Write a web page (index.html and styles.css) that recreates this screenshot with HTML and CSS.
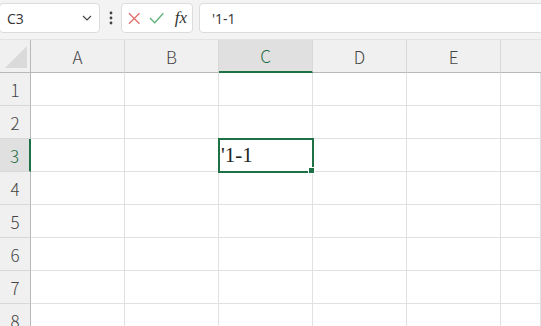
FILE: index.html
```html
<!DOCTYPE html>
<html lang="ja">
<head>
    <meta charset="UTF-8">
    <title>Sheet</title>
    <link rel="stylesheet" href="styles.css">
</head>
<body>
    <!-- Barra de fórmulas -->
    <div class="formula-bar">
        <div class="name-box">
            <span>C3</span>
            <svg class="chevron" width="10" height="6" viewBox="0 0 10 6"><path d="M1 1 L5 5 L9 1" fill="none" stroke="#444" stroke-width="1.2"/></svg>
        </div>
        <div class="dots">
            <svg width="4" height="14" viewBox="0 0 4 14"><circle cx="2" cy="2" r="1.4" fill="#444"/><circle cx="2" cy="7" r="1.4" fill="#444"/><circle cx="2" cy="12" r="1.4" fill="#444"/></svg>
        </div>
        <div class="fx-box">
            <svg width="13" height="13" viewBox="0 0 13 13"><path d="M1 1 L12 12 M12 1 L1 12" stroke="#e06b6b" stroke-width="1.3" fill="none"/></svg>
            <svg width="16" height="12" viewBox="0 0 16 12"><path d="M1 6 L6 11 L15 1" stroke="#5cb176" stroke-width="1.3" fill="none"/></svg>
            <span class="fx">fx</span>
        </div>
        <div class="formula-input">'1-1</div>
    </div>

    <!-- Hoja -->
    <div class="sheet">
        <div class="corner"><div class="triangle"></div></div>
        <div class="col-head">A</div>
        <div class="col-head">B</div>
        <div class="col-head active">C</div>
        <div class="col-head">D</div>
        <div class="col-head">E</div>
        <div class="col-head last"></div>

        <div class="row-head">1</div><div class="cell"></div><div class="cell"></div><div class="cell"></div><div class="cell"></div><div class="cell"></div><div class="cell"></div>
        <div class="row-head">2</div><div class="cell"></div><div class="cell"></div><div class="cell"></div><div class="cell"></div><div class="cell"></div><div class="cell"></div>
        <div class="row-head active">3</div><div class="cell"></div><div class="cell"></div><div class="cell selected">'1-1</div><div class="cell"></div><div class="cell"></div><div class="cell"></div>
        <div class="row-head">4</div><div class="cell"></div><div class="cell"></div><div class="cell"></div><div class="cell"></div><div class="cell"></div><div class="cell"></div>
        <div class="row-head">5</div><div class="cell"></div><div class="cell"></div><div class="cell"></div><div class="cell"></div><div class="cell"></div><div class="cell"></div>
        <div class="row-head">6</div><div class="cell"></div><div class="cell"></div><div class="cell"></div><div class="cell"></div><div class="cell"></div><div class="cell"></div>
        <div class="row-head">7</div><div class="cell"></div><div class="cell"></div><div class="cell"></div><div class="cell"></div><div class="cell"></div><div class="cell"></div>
        <div class="row-head">8</div><div class="cell"></div><div class="cell"></div><div class="cell"></div><div class="cell"></div><div class="cell"></div><div class="cell"></div>
    </div>
</body>
</html>
```
FILE: styles.css
```css
/* General */
body {
    margin: 0;
    height: 326px;
    overflow: hidden;
    background: #fff;
    font-family: "Noto Sans CJK JP", "Noto Sans", sans-serif;
    color: #333;
}

/* Barra de fórmulas */
.formula-bar {
    display: flex;
    align-items: flex-start;
    height: 40px;
    padding-top: 3px;
    box-sizing: border-box;
    background: #f3f3f3;
    border-bottom: 1px solid #e3e3e3;
}

.name-box, .fx-box, .formula-input {
    height: 30px;
    box-sizing: border-box;
    background: #fff;
    border: 1px solid #dcdcdc;
    border-radius: 4px;
    display: flex;
    align-items: center;
}

.name-box {
    width: 101px;
    margin-left: -1px;
    padding: 0 7px 0 7px;
    justify-content: space-between;
    font-family: "Open Sans", sans-serif;
    font-size: 14px;
}

.dots {
    width: 21px;
    height: 30px;
    display: flex;
    align-items: center;
    justify-content: center;
}

.fx-box {
    width: 72px;
    padding: 0 5px 0 6px;
    gap: 9px;
}

.fx {
    font-family: "Liberation Serif", serif;
    font-style: italic;
    font-size: 17px;
    color: #333;
    margin-left: 1px;
}

.formula-input {
    flex: 1;
    margin-left: 6px;
    margin-right: -6px;
    padding-left: 12px;
    font-family: "Open Sans", sans-serif;
    font-size: 14px;
}

/* Hoja */
.sheet {
    display: grid;
    grid-template-columns: 31px repeat(5, 94px) 1fr;
    grid-template-rows: 33px repeat(8, 33px);
}

.corner, .col-head, .row-head {
    background: #f0f0f0;
    color: #444;
    font-size: 17px;
    font-weight: 300;
    display: flex;
    align-items: center;
    justify-content: center;
    box-sizing: border-box;
}

.corner {
    border-right: 1px solid #b8b8b8;
    border-bottom: 1px solid #b8b8b8;
    position: relative;
}

.triangle {
    position: absolute;
    left: 5px;
    bottom: 4px;
    width: 22px;
    height: 22px;
    background: #dadada;
    clip-path: polygon(100% 0, 100% 100%, 0 100%);
}

.col-head {
    border-right: 1px solid #d8d8d8;
    border-bottom: 1px solid #b8b8b8;
}

.col-head.active {
    background: #e0e0e0;
    color: #1e6e42;
    border-bottom: 2px solid #1e7145;
}

.col-head.last {
    border-right: none;
}

.row-head {
    border-right: 1px solid #b8b8b8;
    border-bottom: 1px solid #d8d8d8;
}

.row-head.active {
    background: #e0e0e0;
    color: #1e6e42;
    border-right: 2px solid #1e7145;
}

.cell {
    border-right: 1px solid #e1e1e1;
    border-bottom: 1px solid #e1e1e1;
    box-sizing: border-box;
}

.cell.selected {
    position: relative;
    z-index: 1;
    outline: 2px solid #1e7145;
    outline-offset: -1px;
    display: flex;
    align-items: center;
    padding-left: 2px;
    font-family: "Liberation Serif", serif;
    font-size: 21px;
    color: #222;
}

.cell.selected::after {
    content: "";
    position: absolute;
    right: -3px;
    bottom: -3px;
    width: 5px;
    height: 5px;
    background: #1e7145;
    border: 1px solid #fff;
}
```
